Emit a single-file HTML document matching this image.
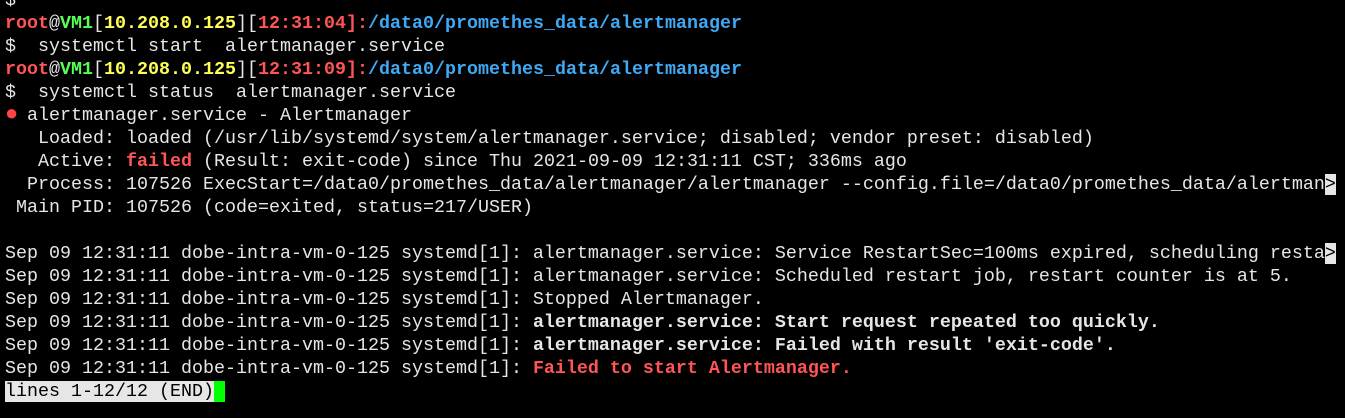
<!DOCTYPE html>
<html><head><style>
html,body{margin:0;padding:0;background:#000;width:1345px;height:418px;overflow:hidden}
pre{margin:0;position:absolute;left:5px;top:-11px;font-family:"Liberation Mono",monospace;font-size:18.33px;line-height:23px;color:#e6e6e6;white-space:pre}
.r{color:#ff5555;font-weight:bold}.g{color:#55ff55;font-weight:bold}.y{color:#ffff55;font-weight:bold}.b{color:#3fa9f5;font-weight:bold}.w{font-weight:bold}
.dot{display:inline-block;width:22px;color:#ff4444;font-size:22px;line-height:18px}
.inv{background:#e6e6e6;color:#000}
.cur{background:#00ff00;color:#00ff00}
</style></head><body><pre>$
<span class="r">root</span>@<span class="g">VM1</span>[<span class="y">10.208.0.125</span>][<span class="r">12:31:04</span><span class="r">]:</span><span class="b">/data0/promethes_data/alertmanager</span>
$  systemctl start  alertmanager.service
<span class="r">root</span>@<span class="g">VM1</span>[<span class="y">10.208.0.125</span>][<span class="r">12:31:09</span><span class="r">]:</span><span class="b">/data0/promethes_data/alertmanager</span>
$  systemctl status  alertmanager.service
<span class="dot">●</span>alertmanager.service - Alertmanager
   Loaded: loaded (/usr/lib/systemd/system/alertmanager.service; disabled; vendor preset: disabled)
   Active: <span class="r">failed</span> (Result: exit-code) since Thu 2021-09-09 12:31:11 CST; 336ms ago
  Process: 107526 ExecStart=/data0/promethes_data/alertmanager/alertmanager --config.file=/data0/promethes_data/alertman<span class="inv">&gt;</span>
 Main PID: 107526 (code=exited, status=217/USER)

Sep 09 12:31:11 dobe-intra-vm-0-125 systemd[1]: alertmanager.service: Service RestartSec=100ms expired, scheduling resta<span class="inv">&gt;</span>
Sep 09 12:31:11 dobe-intra-vm-0-125 systemd[1]: alertmanager.service: Scheduled restart job, restart counter is at 5.
Sep 09 12:31:11 dobe-intra-vm-0-125 systemd[1]: Stopped Alertmanager.
Sep 09 12:31:11 dobe-intra-vm-0-125 systemd[1]: <span class="w">alertmanager.service: Start request repeated too quickly.</span>
Sep 09 12:31:11 dobe-intra-vm-0-125 systemd[1]: <span class="w">alertmanager.service: Failed with result 'exit-code'.</span>
Sep 09 12:31:11 dobe-intra-vm-0-125 systemd[1]: <span class="r">Failed to start Alertmanager.</span>
<span class="inv">lines 1-12/12 (END)</span><span class="cur">_</span></pre></body></html>
